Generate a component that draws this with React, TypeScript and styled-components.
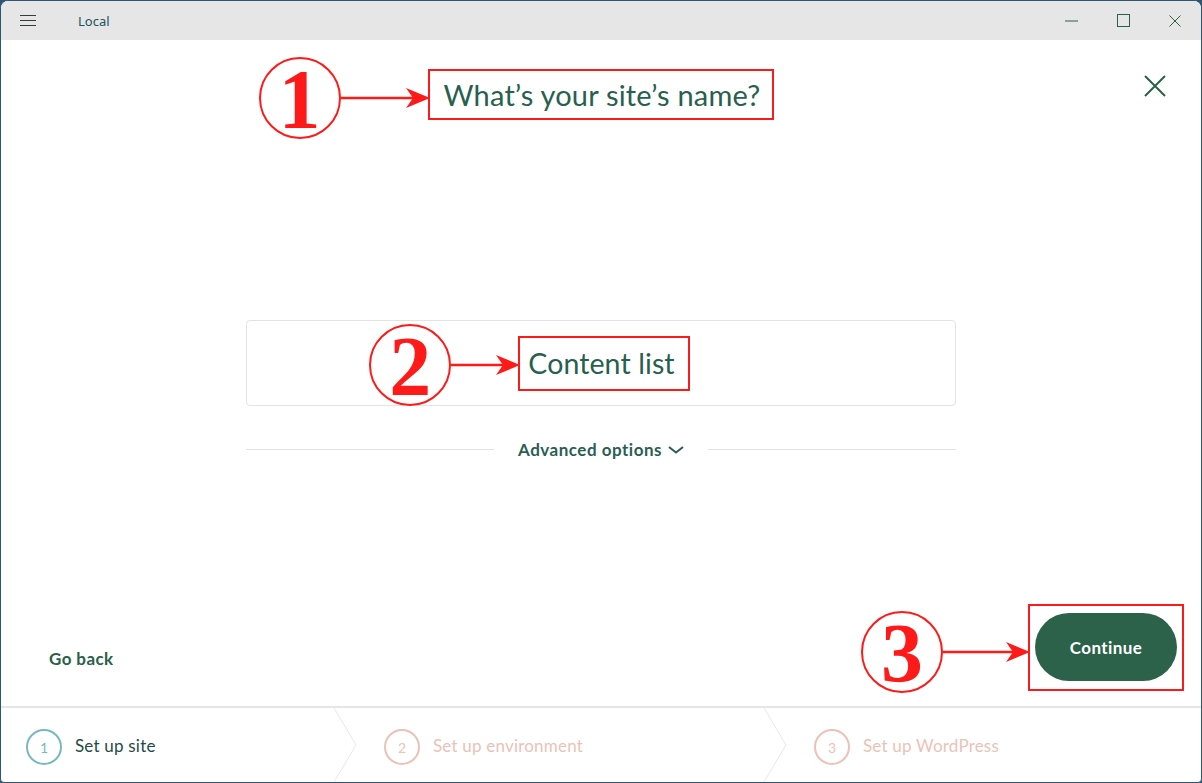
import styled, { createGlobalStyle } from 'styled-components'

const GlobalStyle = createGlobalStyle`
  html, body {
    margin: 0;
    padding: 0;
    background: #2f5573;
  }
  body {
    font-family: Lato, "Noto Sans", sans-serif;
  }
`

const Window = styled.div`
  box-sizing: border-box;
  width: 1202px;
  height: 783px;
  border: 1px solid #2f5573;
  border-radius: 8px 8px 4px 4px;
  background: #fff;
  display: flex;
  flex-direction: column;
  overflow: hidden;
`

const TitleBar = styled.div`
  height: 39px;
  flex-shrink: 0;
  background: #e6e6e6;
  display: flex;
  align-items: center;
`

const MenuButton = styled.div`
  width: 16px;
  margin-left: 19px;
  display: flex;
  flex-direction: column;
  gap: 4px;

  span {
    height: 1px;
    background: #2d3f3a;
  }
`

const AppName = styled.div`
  margin-left: 42px;
  font-family: "Noto Sans", sans-serif;
  font-size: 13px;
  color: #23515e;
`

const WinControls = styled.div`
  margin-left: auto;
  display: flex;
`

const WinButton = styled.div`
  width: 52px;
  height: 39px;
  display: flex;
  align-items: center;
  justify-content: center;
`

const Main = styled.div`
  flex: 1;
  display: flex;
  flex-direction: column;
  align-items: center;
`

const HeaderRow = styled.div`
  width: 100%;
  margin-top: 29px;
  display: grid;
  grid-template-columns: 1fr auto 1fr;
`

const CloseButton = styled.div`
  justify-self: end;
  margin: 6px 35px 0 0;
  width: 22px;
  height: 22px;
`

const Boxed = styled.div`
  position: relative;
  border: 2px solid #ff1a1a;
`

const Heading = styled(Boxed)`
  box-sizing: border-box;
  height: 51px;
  padding: 0 12px 0 14px;
  font-size: 29px;
  letter-spacing: 0.2px;
  line-height: 47px;
  color: #28604f;
`

const Marker = styled.div<{ $dy: number }>`
  position: absolute;
  right: 100%;
  top: 50%;
  transform: translateY(calc(-50% + ${(p) => p.$dy}px));
  display: flex;
  align-items: center;
  pointer-events: none;
`

const MarkCircle = styled.div`
  box-sizing: border-box;
  width: 82px;
  height: 82px;
  border: 2px solid #ff1a1a;
  border-radius: 50%;
  display: flex;
  align-items: center;
  justify-content: center;
  font-family: "Liberation Serif", serif;
  font-weight: bold;
  font-size: 84px;
  line-height: 1;
  color: #ff1a1a;
  letter-spacing: 0;

  span {
    transform: translateY(2px);
  }
`

const SiteField = styled.div`
  box-sizing: border-box;
  width: 710px;
  height: 86px;
  margin-top: 200px;
  border: 1px solid #e3e3e3;
  border-radius: 4px;
  display: flex;
  align-items: center;
  justify-content: center;
`

const SiteName = styled(Boxed)`
  box-sizing: border-box;
  height: 55px;
  margin-left: 6px;
  padding: 0 13px 0 8px;
  font-size: 28.5px;
  letter-spacing: 0.1px;
  line-height: 51px;
  color: #28604f;
`

const AdvancedRow = styled.div`
  width: 710px;
  margin-top: 33px;
  display: flex;
  align-items: center;
  gap: 24px;
`

const Rule = styled.div`
  flex: 1;
  height: 1px;
  background: #e3e3e3;
`

const AdvancedLink = styled.div`
  display: flex;
  align-items: center;
  gap: 6px;
  font-size: 17px;
  letter-spacing: 0.5px;
  font-weight: bold;
  color: #2a5e55;
`

const FooterRow = styled.div`
  box-sizing: border-box;
  width: 100%;
  margin-top: auto;
  padding: 0 17px 15px 48px;
  display: flex;
  justify-content: space-between;
`

const GoBack = styled.div`
  align-self: flex-end;
  margin-bottom: 22px;
  font-size: 17px;
  letter-spacing: 0.4px;
  font-weight: bold;
  color: #2a6048;
`

const ContinueBox = styled(Boxed)`
  padding: 7px 5px 8px 5px;
`

const ContinueButton = styled.div`
  width: 142px;
  height: 68px;
  border-radius: 34px;
  background: #2b6249;
  color: #fff;
  font-size: 17px;
  letter-spacing: 0.4px;
  font-weight: bold;
  display: flex;
  align-items: center;
  justify-content: center;
`

const Stepper = styled.div`
  height: 76px;
  flex-shrink: 0;
  box-sizing: border-box;
  border-top: 2px solid #e6e6e6;
  display: grid;
  grid-template-columns: 356px 430px 1fr;
`

const Step = styled.div<{ $pad: number; $active?: boolean }>`
  display: flex;
  align-items: center;
  padding-left: ${(p) => p.$pad}px;
  color: ${(p) => (p.$active ? '#1f4b45' : '#e9c3b8')};
  font-size: 17px;
  letter-spacing: 0.2px;
`

const StepNum = styled.div<{ $active?: boolean }>`
  box-sizing: border-box;
  width: 36px;
  height: 36px;
  margin-top: 4px;
  border-radius: 50%;
  border: 2px solid ${(p) => (p.$active ? '#78b9c1' : '#e9c3b8')};
  color: ${(p) => (p.$active ? '#78b9c1' : '#e9c3b8')};
  font-size: 14px;
  letter-spacing: 0;
  display: flex;
  align-items: center;
  justify-content: center;
`

const StepLabel = styled.div`
  margin-left: 13px;
  margin-top: 1px;
  flex: 1;
`

const Arrow = ({ width }: { width: number }) => (
  <svg width={width} height="22" viewBox={`0 0 ${width} 22`}>
    <line x1="0" y1="11" x2={width - 10} y2="11" stroke="#ff1a1a" strokeWidth="2.5" />
    <path d={`M${width - 24} 1 L${width} 11 L${width - 24} 21 L${width - 17} 11 Z`} fill="#ff1a1a" />
  </svg>
)

const Annotation = ({ n, arrow, dy }: { n: string; arrow: number; dy: number }) => (
  <Marker $dy={dy}>
    <MarkCircle>
      <span>{n}</span>
    </MarkCircle>
    <Arrow width={arrow} />
  </Marker>
)

const Chevron = () => (
  <svg width="23" height="74" viewBox="0 0 23 74">
    <polyline points="0,0 22,37 0,74" fill="none" stroke="#e8e8e8" strokeWidth="1" />
  </svg>
)

export default function App() {
  return (
    <>
      <GlobalStyle />
      <Window>
        <TitleBar>
          <MenuButton>
            <span />
            <span />
            <span />
          </MenuButton>
          <AppName>Local</AppName>
          <WinControls>
            <WinButton>
              <svg width="13" height="2" viewBox="0 0 13 2">
                <line x1="0" y1="1" x2="13" y2="1" stroke="#2a6048" strokeWidth="1" />
              </svg>
            </WinButton>
            <WinButton>
              <svg width="13" height="13" viewBox="0 0 13 13">
                <rect x="0.5" y="0.5" width="12" height="12" fill="none" stroke="#2a6048" strokeWidth="1" />
              </svg>
            </WinButton>
            <WinButton>
              <svg width="12" height="12" viewBox="0 0 12 12">
                <path d="M0.5 0.5 L11.5 11.5 M11.5 0.5 L0.5 11.5" stroke="#2a6048" strokeWidth="1" />
              </svg>
            </WinButton>
          </WinControls>
        </TitleBar>

        <Main>
          <HeaderRow>
            <div />
            <Heading>
              <Annotation n="1" arrow={89} dy={3} />
              What’s your site’s name?
            </Heading>
            <CloseButton>
              <svg width="22" height="22" viewBox="0 0 22 22">
                <path d="M1 1 L21 21 M21 1 L1 21" stroke="#2a6048" strokeWidth="2" />
              </svg>
            </CloseButton>
          </HeaderRow>

          <SiteField>
            <SiteName>
              <Annotation n="2" arrow={69} dy={2} />
              Content list
            </SiteName>
          </SiteField>

          <AdvancedRow>
            <Rule />
            <AdvancedLink>
              Advanced options
              <svg width="16" height="8" viewBox="0 0 16 8">
                <polyline points="1,1 8,6.5 15,1" fill="none" stroke="#2a5e55" strokeWidth="2" />
              </svg>
            </AdvancedLink>
            <Rule />
          </AdvancedRow>

          <FooterRow>
            <GoBack>Go back</GoBack>
            <ContinueBox>
              <Annotation n="3" arrow={87} dy={4} />
              <ContinueButton>Continue</ContinueButton>
            </ContinueBox>
          </FooterRow>
        </Main>

        <Stepper>
          <Step $pad={25} $active>
            <StepNum $active>1</StepNum>
            <StepLabel>Set up site</StepLabel>
            <Chevron />
          </Step>
          <Step $pad={27}>
            <StepNum>2</StepNum>
            <StepLabel>Set up environment</StepLabel>
            <Chevron />
          </Step>
          <Step $pad={27}>
            <StepNum>3</StepNum>
            <StepLabel>Set up WordPress</StepLabel>
          </Step>
        </Stepper>
      </Window>
    </>
  )
}
